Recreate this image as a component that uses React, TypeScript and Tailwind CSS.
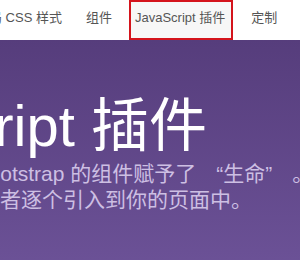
const font = { fontFamily: '"Liberation Sans", "Noto Sans CJK SC", sans-serif' };

export default function App() {
  return (
    <div className="h-[260px] w-[300px] overflow-hidden bg-white" style={font}>
      <nav className="flex h-[40px] items-stretch bg-white -ml-[37px] whitespace-nowrap text-[13px] text-[#555]">
        <a className="flex items-center pl-[13px] pr-[11px] pb-[5px]">全局 CSS 样式</a>
        <a className="flex items-center pl-[13px] pr-[15px] pb-[5px]">组件</a>
        <a className="ml-[2px] mr-[5px] flex items-center border-2 border-[#d4141c] bg-[#f7f7f7] pl-[4px] pr-[6px] pb-[5px]">
          JavaScript 插件
        </a>
        <a className="flex items-center px-[13px] pb-[5px]">定制</a>
      </nav>
      <header className="h-[220px] bg-gradient-to-b from-[#563d7c] to-[#6b5196] pt-[57px] whitespace-nowrap">
        <h1 className="-ml-[196px] text-[58px] leading-none text-white">
          JavaScript 插件
        </h1>
        <p className="mt-[6px] text-[21px] leading-[26px] text-[#cdbfe3]">
          <span className="block -ml-[162px]">
            jQuery 插件为 Bootstrap 的组件赋予了
            <span className="inline-block w-[27px] text-right">“</span>
            生命
            <span className="inline-block w-[27px] text-left">”</span>。
          </span>
          <span className="block -ml-[21px]">或者逐个引入到你的页面中。</span>
        </p>
      </header>
    </div>
  );
}
